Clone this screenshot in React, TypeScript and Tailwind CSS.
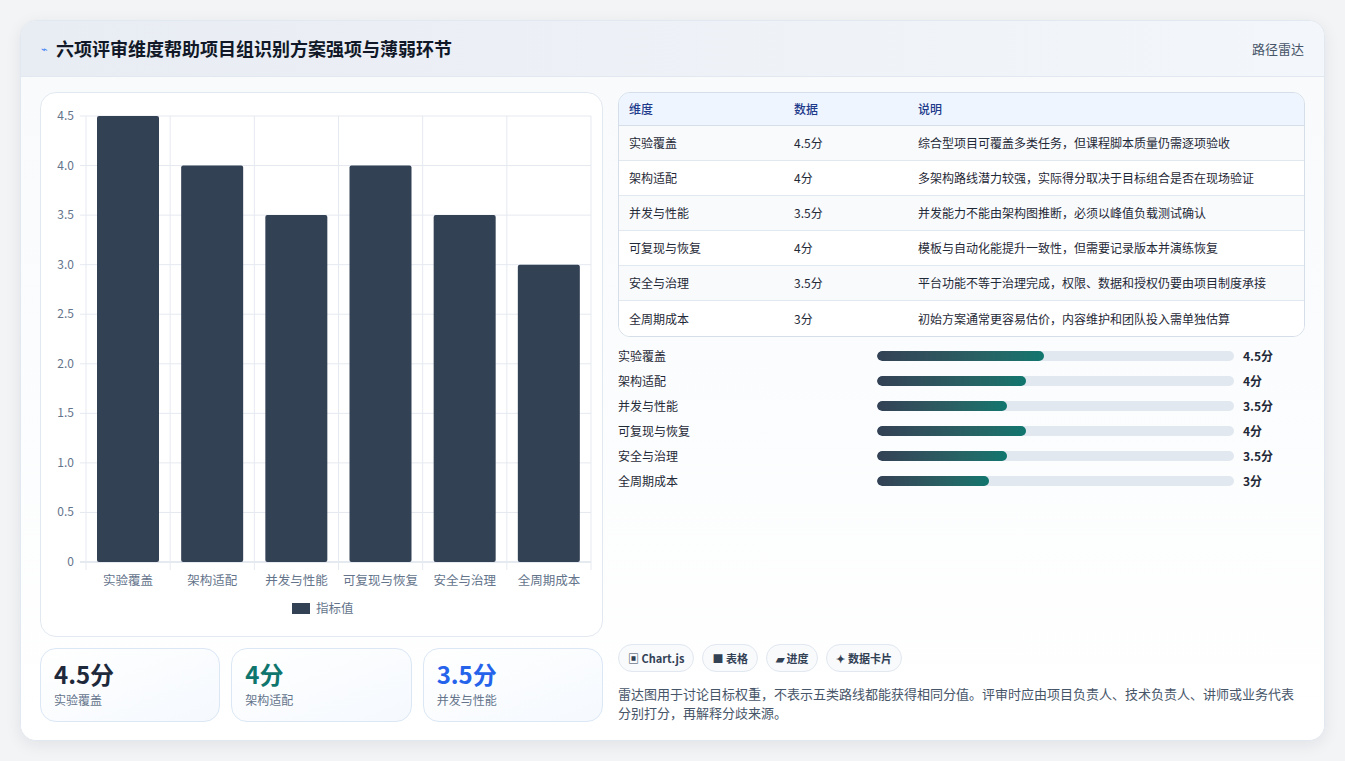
import React from "react";

const dims = [
  { n: "实验覆盖", v: 4.5, d: "综合型项目可覆盖多类任务，但课程脚本质量仍需逐项验收" },
  { n: "架构适配", v: 4, d: "多架构路线潜力较强，实际得分取决于目标组合是否在现场验证" },
  { n: "并发与性能", v: 3.5, d: "并发能力不能由架构图推断，必须以峰值负载测试确认" },
  { n: "可复现与恢复", v: 4, d: "模板与自动化能提升一致性，但需要记录版本并演练恢复" },
  { n: "安全与治理", v: 3.5, d: "平台功能不等于治理完成，权限、数据和授权仍要由项目制度承接" },
  { n: "全周期成本", v: 3, d: "初始方案通常更容易估价，内容维护和团队投入需单独估算" },
];

const font = { fontFamily: '"Noto Sans CJK SC", "Noto Sans", sans-serif' };

function Chart() {
  const L = 45, R = 550, T = 23, B = 469;
  const cw = (R - L) / 6;
  const y = (v: number) => B - (v / 4.5) * (B - T);
  const ticks = [0, 0.5, 1, 1.5, 2, 2.5, 3, 3.5, 4, 4.5];
  return (
    <svg width="560" height="542" style={font}>
      {ticks.map((t) => (
        <g key={t}>
          <line x1={L - 6} x2={R} y1={y(t)} y2={y(t)} stroke={t === 0 ? "#cbd5e1" : "#e5e9f0"} />
          <text x={33} y={y(t) + 4} textAnchor="end" fontSize="12" fill="#64748b">{t === 0 ? "0" : t.toFixed(1)}</text>
        </g>
      ))}
      {Array.from({ length: 7 }).map((_, i) => (
        <line key={i} x1={L + i * cw} x2={L + i * cw} y1={T} y2={B + 8} stroke="#e5e9f0" />
      ))}
      {dims.map((d, i) => (
        <g key={d.n}>
          <rect x={L + i * cw + 11} y={y(d.v)} width={62} height={B - y(d.v)} rx={2} fill="#334155" />
          <text x={L + i * cw + cw / 2} y={492} textAnchor="middle" fontSize="12.5" fill="#64748b">{d.n}</text>
        </g>
      ))}
      <rect x={251} y={510} width={18} height={11} fill="#334155" />
      <text x={275} y={520} fontSize="12.5" fill="#64748b">指标值</text>
    </svg>
  );
}

export default function App() {
  return (
    <div className="min-h-[761px] bg-[#f3f4f6] p-5" style={font}>
      <div className="rounded-2xl bg-white shadow-[0_4px_16px_rgba(15,23,42,0.08)] border border-[#e2e8f0] overflow-hidden">
        <div className="h-[56px] flex items-center justify-between px-5 bg-gradient-to-r from-[#e8ecf3] to-[#f3f6fa] border-b border-[#e2e8f0]">
          <div className="flex items-center gap-2">
            <span className="text-[#3b82f6] text-[11px]">⌁</span>
            <h1 className="text-[18px] font-bold text-[#111827]">六项评审维度帮助项目组识别方案强项与薄弱环节</h1>
          </div>
          <span className="text-[13px] text-[#475569]">路径雷达</span>
        </div>
        <div className="flex gap-[15px] px-[19px] pt-[15px] pb-[18px] bg-gradient-to-b from-[#f8fafc] to-white">
          <div className="w-[563px] flex flex-col gap-[11px]">
            <div className="h-[545px] rounded-2xl border border-[#e2e8f0] bg-white overflow-hidden"><Chart /></div>
            <div className="grid grid-cols-3 gap-[11px]">
              {[["4.5分", "实验覆盖", "text-[#1e293b]"], ["4分", "架构适配", "text-[#0f766e]"], ["3.5分", "并发与性能", "text-[#2563eb]"]].map(([v, l, c]) => (
                <div key={l} className="h-[74px] rounded-2xl border border-[#dbe7f5] bg-gradient-to-br from-white to-[#f5f9fe] px-[13px] pt-[10px]">
                  <div className={`text-[24px] font-bold leading-[30px] ${c}`}>{v}</div>
                  <div className="text-[12px] text-[#64748b] mt-[2px]">{l}</div>
                </div>
              ))}
            </div>
          </div>
          <div className="flex-1 flex flex-col">
            <div className="rounded-xl border border-[#d5dee9] overflow-hidden text-[12px]">
              <div className="grid grid-cols-[165px_124px_1fr] h-[33px] items-center px-[10px] bg-[#eef5fe] text-[#1e3a8a] font-medium border-b border-[#d5dee9]">
                <span>维度</span><span>数据</span><span>说明</span>
              </div>
              {dims.map((d, i) => (
                <div key={d.n} className={`grid grid-cols-[165px_124px_1fr] h-[35px] items-center px-[10px] text-[#1f2937] ${i % 2 ? "bg-white" : "bg-[#f8fafc]"} ${i < 5 ? "border-b border-[#e2e8f0]" : ""}`}>
                  <span>{d.n}</span><span>{d.v}分</span><span>{d.d}</span>
                </div>
              ))}
            </div>
            <div className="mt-[12px] flex flex-col gap-[11px]">
              {dims.map((d) => (
                <div key={d.n} className="flex items-center h-[14px] text-[12px]">
                  <span className="w-[259px] text-[#1f2937]">{d.n}</span>
                  <div className="w-[357px] h-[10px] rounded-full bg-[#e2e8f0] overflow-hidden">
                    <div className="h-full rounded-full bg-gradient-to-r from-[#334155] to-[#0f766e]" style={{ width: `${(d.v / 9.6) * 100}%` }} />
                  </div>
                  <span className="ml-[9px] font-bold text-[#1f2937]">{d.v}分</span>
                </div>
              ))}
            </div>
            <div className="flex-1" />
            <div className="flex gap-[8px] text-[11px] font-bold text-[#334155]">
              {["▣ Chart.js", "■ 表格", "▰ 进度", "✦ 数据卡片"].map((c) => (
                <span key={c} className="h-[28px] px-[9px] flex items-center rounded-full border border-[#e2e8f0] bg-[#f8fafc]">{c}</span>
              ))}
            </div>
            <p className="mt-[12px] text-[13px] leading-[19px] text-[#475569]">雷达图用于讨论目标权重，不表示五类路线都能获得相同分值。评审时应由项目负责人、技术负责人、讲师或业务代表分别打分，再解释分歧来源。</p>
          </div>
        </div>
      </div>
    </div>
  );
}
